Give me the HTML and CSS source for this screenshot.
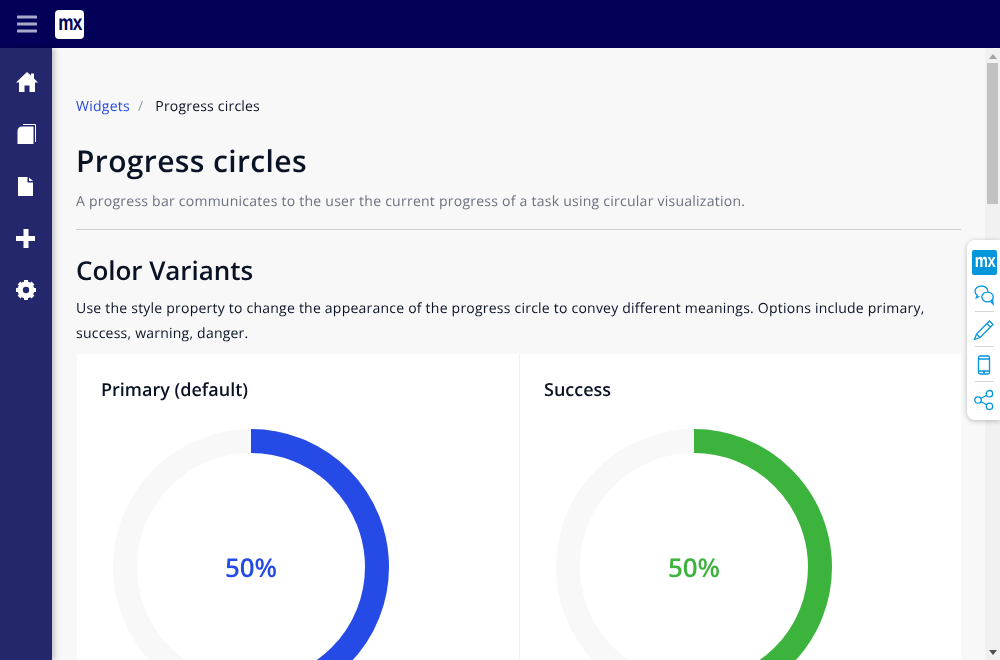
FILE: index.html
```html
<!DOCTYPE html>
<html lang="en">
<head>
<meta charset="utf-8">
<title>Progress circles</title>
<link rel="stylesheet" href="styles.css">
</head>
<body>
<div class="app">
  <header class="topbar">
    <svg class="burger" width="20" height="18" viewBox="0 0 20 18"><path d="M1 2h18M1 9h18M1 16h18" stroke="#a9a9cc" stroke-width="3" stroke-linecap="round"/></svg>
    <div class="logo"><span class="logo-text">mx</span></div>
  </header>
  <div class="body">
    <nav class="sidebar">
      <svg class="nav-icon" width="24" height="24" viewBox="0 0 24 24"><path fill="#fff" d="M13 2 2 12.500h3V22h5.500v-6.500h5V22H21v-9.500h3L20 8.500V3.500h-3v2z"/></svg>
      <svg class="nav-icon" width="24" height="24" viewBox="0 0 24 24"><path fill="#fff" d="M8.500 4.500h11V22h-16V9.500q0-5 5-5z"/><path fill="none" stroke="#fff" d="M9 2.500h12.500V20"/></svg>
      <svg class="nav-icon" width="24" height="24" viewBox="0 0 24 24"><path fill="#fff" d="M4 3h9.500v5.500H19V22H4z"/><path fill="#fff" d="M15 3.500 19 7h-4z"/></svg>
      <svg class="nav-icon" width="24" height="24" viewBox="0 0 24 24"><path fill="#fff" d="M9.500 3h5v7h6.500v5h-6.500v7h-5v-7H2v-5h7.500z"/></svg>
      <svg class="nav-icon" width="24" height="24" viewBox="0 0 24 24"><circle cx="12" cy="12" r="6" fill="none" stroke="#fff" stroke-width="5"/><path stroke="#fff" stroke-width="4" d="M12 2v20M2 12h20M5 5l14 14M19 5 5 19"/><circle cx="12" cy="12" r="3.200" fill="#24276c"/></svg>
    </nav>
    <main class="main">
      <div class="page">
        <div class="crumbs"><a class="crumb-link">Widgets</a><span class="crumb-sep">/</span><span class="crumb-current">Progress circles</span></div>
        <h1 class="title">Progress circles</h1>
        <p class="subtitle">A progress bar communicates to the user the current progress of a task using circular visualization.</p>
        <hr class="rule">
        <h2 class="section">Color Variants</h2>
        <p class="lead">Use the style property to change the appearance of the progress circle to convey different meanings. Options include primary, success, warning, danger.</p>
        <div class="cards">
          <section class="card">
            <h3 class="card-title">Primary (default)</h3>
            <div class="circle">
              <svg width="276" height="276" viewBox="0 0 276 276"><circle cx="138" cy="138" r="126" fill="none" stroke="#f8f8f8" stroke-width="24"/><path d="M138 12a126 126 0 0 1 0 252" fill="none" stroke="#264ae5" stroke-width="24"/></svg>
              <span class="pct primary">50%</span>
            </div>
          </section>
          <section class="card">
            <h3 class="card-title">Success</h3>
            <div class="circle">
              <svg width="276" height="276" viewBox="0 0 276 276"><circle cx="138" cy="138" r="126" fill="none" stroke="#f8f8f8" stroke-width="24"/><path d="M138 12a126 126 0 0 1 0 252" fill="none" stroke="#3cb33d" stroke-width="24"/></svg>
              <span class="pct success">50%</span>
            </div>
          </section>
        </div>
      </div>
      <div class="scrollbar">
        <svg class="arrow" width="8" height="5" viewBox="0 0 8 5"><path d="M4 0 8 5H0z" fill="#a3a3a3"/></svg>
        <div class="thumb"></div>
        <svg class="arrow arrow-down" width="8" height="5" viewBox="0 0 8 5"><path d="M0 0h8L4 5z" fill="#505050"/></svg>
      </div>
    </main>
  </div>
  <aside class="tools">
    <div class="tool-logo"><span class="tool-logo-text">mx</span></div>
    <svg class="tool" width="22" height="22" viewBox="0 0 22 22" fill="none" stroke="#0595db" stroke-width="1.300"><path d="M8.500 2C4.900 2 2 4.300 2 7.200c0 1.600.9 3 2.300 4L3.300 14l3.200-1.700"/><path d="M15 7.500C14.500 4.200 12 2 8.500 2"/><ellipse cx="14.500" cy="13" rx="5.700" ry="4.800"/><path d="M17.500 17l2.500 3-.3-5"/></svg>
    <hr class="tool-rule">
    <svg class="tool" width="22" height="22" viewBox="0 0 22 22" fill="none" stroke="#0595db" stroke-width="1.300"><path d="M16.500 2 20 5.500 7 18.500 1.500 20.500 3.500 15zM14 4.500l3.500 3.500M3.500 15 7 18.500"/></svg>
    <hr class="tool-rule">
    <svg class="tool" width="22" height="22" viewBox="0 0 22 22" fill="none" stroke="#0595db" stroke-width="1.300"><rect x="5.500" y="2" width="11" height="18" rx="1.800"/><path d="M5.500 5h11M5.500 17h11M10 18.500h2"/></svg>
    <hr class="tool-rule">
    <svg class="tool" width="22" height="22" viewBox="0 0 22 22" fill="none" stroke="#0595db" stroke-width="1.300"><circle cx="5" cy="11" r="3.200"/><circle cx="16.500" cy="4.700" r="3.200"/><circle cx="16.500" cy="17.300" r="3.200"/><path d="m7.800 9.500 5.900-3.200M7.800 12.500l5.900 3.200"/></svg>
  </aside>
</div>
</body>
</html>
```
FILE: styles.css
```css
* { box-sizing: border-box; }
html, body { margin: 0; height: 100%; overflow: hidden; }
body { font-family: "Open Sans", "Noto Sans", sans-serif; color: #0a1326; font-size: 14px; text-rendering: geometricPrecision; letter-spacing: .25px; }
.app { height: 660px; display: flex; flex-direction: column; position: relative; }
.topbar { height: 48px; flex: none; background: #020057; display: flex; align-items: center; padding-left: 17px; gap: 18px; }
.logo { width: 29px; height: 29px; background: #fff; border-radius: 4px; color: #020057; font: 700 22px/25px "Liberation Sans", sans-serif; text-align: center; overflow: hidden; }
.logo-text { display: inline-block; transform: scaleX(.78); margin: 0 -5px; letter-spacing: -1px; }
.body { flex: 1; display: flex; min-height: 0; }
.sidebar { width: 52px; flex: none; background: #24276c; display: flex; flex-direction: column; align-items: center; padding: 22px 0 0 2px; gap: 28px; position: relative; z-index: 2; box-shadow: 2px 0 6px rgba(0, 0, 0, .25); }
.nav-icon { display: block; margin-right: 2px; }
.main { flex: 1; min-width: 0; display: flex; background: #f8f8f8; overflow: hidden; }
.page { flex: 1; min-width: 0; padding: 49px 24px 0; will-change: transform; }
.crumbs { display: flex; align-items: center; height: 20px; line-height: 20px; margin-top: 0; }
.crumb-link { color: #264ae5; }
.crumb-sep { color: #9a9ea6; margin: 0 12px 0 8px; }
.crumb-current { letter-spacing: .2px; }
.title { font-size: 30px; font-weight: 600; line-height: 40px; margin: 24px 0 0; letter-spacing: .375px; }
.subtitle { font-size: 14px; color: #6c717e; line-height: 20px; margin: 11px 0 0; }
.rule { border: 0; border-top: 1px solid #ced0d3; margin: 17px 0 0; }
.section { font-size: 26px; font-weight: 600; line-height: 32px; margin: 24px 0 0; letter-spacing: -.05px; }
.lead { line-height: 25px; margin: 10px 0 0; letter-spacing: .225px; }
.cards { display: grid; grid-template-columns: 443px 440px; margin: 8px 0 0 1px; background: #fff; height: 400px; }
.card { padding: 24px; border-right: 1px solid #f1f1f1; }
.card:last-child { border-right: 0; }
.card-title { font-size: 18px; font-weight: 600; line-height: 24px; margin: 0; letter-spacing: 0; }
.circle { position: relative; width: 276px; height: 276px; margin: 27px 0 0 12px; }
.circle svg { display: block; }
.pct { position: absolute; left: 0; right: 0; top: 118px; text-align: center; font-size: 26px; font-weight: 600; line-height: 40px; letter-spacing: 0; }
.primary { color: #264ae5; }
.success { color: #3cb33d; }
.scrollbar { width: 15px; flex: none; background: #f1f1f1; display: flex; flex-direction: column; align-items: center; padding-top: 6px; position: relative; }
.arrow { display: block; flex: none; }
.thumb { width: 11px; height: 141px; background: #c1c1c1; margin-top: 4px; }
.arrow-down { margin-top: auto; margin-bottom: 5px; }
.tools { position: absolute; right: 0; top: 240px; width: 33px; height: 180px; background: #fff; border-radius: 8px 0 0 8px; box-shadow: 0 1px 5px rgba(0, 0, 0, .25); display: flex; flex-direction: column; align-items: center; padding-top: 10px; padding-left: 2px; }
.tool-logo { width: 25px; height: 25px; background: #0595db; border-radius: 2px; color: #fff; font: 700 19px/24px "Liberation Sans", sans-serif; text-align: center; overflow: hidden; }
.tool-logo-text { display: inline-block; transform: scaleX(.78); margin: 0 -5px; letter-spacing: -.8px; }
.tool { display: block; flex: none; margin-top: 0; margin-right: 2px; }
.tool-logo + .tool { margin-top: 9px; }
.tool-rule { width: 19px; border: 0; border-top: 1px solid #d4d4d4; margin: 5px 0 7px; }
```
